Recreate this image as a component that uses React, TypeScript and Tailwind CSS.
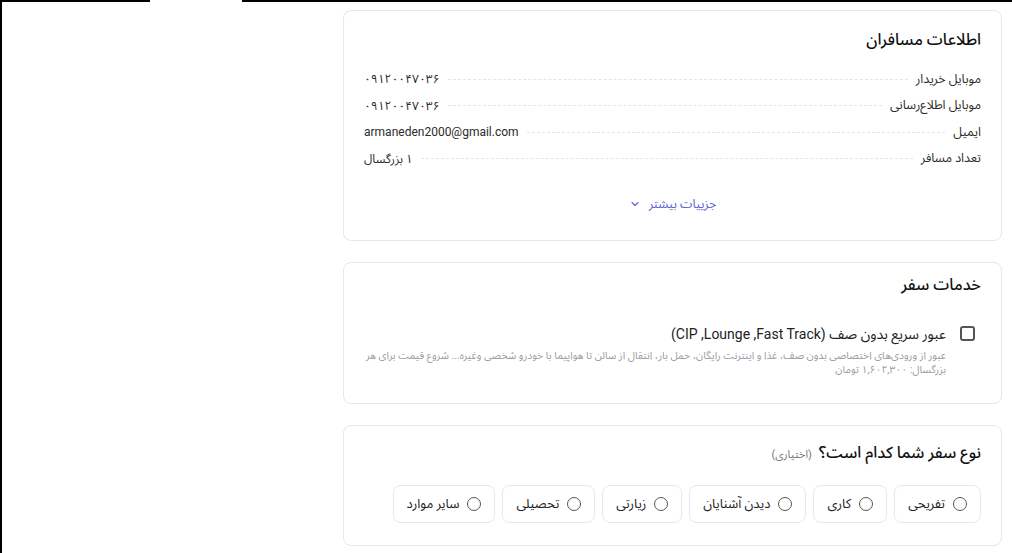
import React from "react";
import { ChevronDown } from "lucide-react";

const font = {
  fontFamily:
    "Roboto, 'Noto Sans Arabic', Vazirmatn, 'Noto Naskh Arabic', 'DejaVu Sans', sans-serif",
};

function InfoRow({ label, value }: { label: string; value: string }) {
  return (
    <div className="flex h-[26.5px] items-center gap-2 text-[12.5px] text-[#2b2b2b]">
      <span className="whitespace-nowrap">{label}</span>
      <div className="flex-1 border-t border-dashed border-[#e3e5ea]" />
      <span className="whitespace-nowrap text-[12px]" dir="auto">
        {value}
      </span>
    </div>
  );
}

function Radio({ label }: { label: string }) {
  return (
    <div className="flex h-[38px] items-center gap-2 rounded-lg border border-[#e6e7eb] bg-white px-[13px] text-[13px] text-[#222]">
      <span className="h-[14px] w-[14px] shrink-0 rounded-full border-[1.5px] border-[#555]" />
      <span className="whitespace-nowrap">{label}</span>
    </div>
  );
}

export default function App() {
  return (
    <div className="min-h-[553px] w-[1012px] bg-white" style={font}>
      <div className="flex h-[2px]">
        <div className="w-[150px] bg-black" />
        <div className="w-[92px] bg-white" />
        <div className="flex-1 bg-black" />
      </div>
      <div className="flex min-h-[551px] border-l-2 border-black">
        <div className="w-[341px]" />
        <div dir="rtl" className="flex w-[659px] flex-col gap-[21px] pt-[8px]">
          {/* Card 1 */}
          <div className="rounded-lg border border-[#e6e7eb] bg-white px-5 pb-[26px] pt-[17px]">
            <h2 className="text-[16px] font-medium leading-6 text-[#111]">
              اطلاعات مسافران
            </h2>
            <div className="mt-[14px] flex flex-col">
              <InfoRow label="موبایل خریدار" value="۰۹۱۲۰۰۴۷۰۳۶" />
              <InfoRow label="موبایل اطلاع‌رسانی" value="۰۹۱۲۰۰۴۷۰۳۶" />
              <InfoRow label="ایمیل" value="armaneden2000@gmail.com" />
              <InfoRow label="تعداد مسافر" value="۱ بزرگسال" />
            </div>
            <div className="mt-[22px] flex items-center justify-center gap-2 text-[12.5px] leading-5 text-[#5c61d6]">
              <span>جزییات بیشتر</span>
              <ChevronDown size={12} strokeWidth={2.2} />
            </div>
          </div>

          {/* Card 2 */}
          <div className="rounded-lg border border-[#e6e7eb] bg-white px-5 pb-[26px] pt-[10px]">
            <h2 className="text-[16px] font-medium leading-6 text-[#111]">
              خدمات سفر
            </h2>
            <div className="mt-[28px] flex items-start gap-[14px] pr-[6px]">
              <span className="mt-[1px] h-[15px] w-[15px] shrink-0 rounded-[3px] border-2 border-[#555]" />
              <div className="flex flex-col">
                <span className="text-[14px] leading-[18px] text-[#222]">
                  عبور سریع بدون صف (Fast Track,{"\u200F"} Lounge,{"\u200F"} CIP)
                </span>
                <p className="mt-[6px] text-[10.4px] leading-[14px] text-[#9a9ca3]">
                  عبور از ورودی‌های اختصاصی بدون صف، غذا و اینترنت رایگان، حمل بار، انتقال از سالن تا هواپیما با خودرو شخصی وغیره... شروع قیمت برای هر بزرگسال: ۱,۶۰۲,۳۰۰ تومان
                </p>
              </div>
            </div>
          </div>

          {/* Card 3 */}
          <div className="rounded-lg border border-[#e6e7eb] bg-white px-5 pb-[22px] pt-[15px]">
            <div className="flex items-baseline gap-[7px]">
              <h2 className="text-[16px] font-medium leading-6 text-[#111]">
                نوع سفر شما کدام است؟
              </h2>
              <span className="text-[11px] text-[#777]">(اختیاری)</span>
            </div>
            <div className="mt-[20px] flex gap-[7px]">
              <Radio label="تفریحی" />
              <Radio label="کاری" />
              <Radio label="دیدن آشنایان" />
              <Radio label="زیارتی" />
              <Radio label="تحصیلی" />
              <Radio label="سایر موارد" />
            </div>
          </div>
        </div>
      </div>
    </div>
  );
}
